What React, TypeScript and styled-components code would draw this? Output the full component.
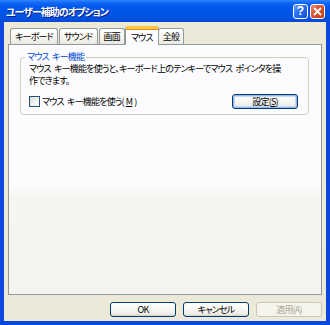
import styled, { createGlobalStyle } from 'styled-components'

const GlobalStyle = createGlobalStyle`
  html, body {
    margin: 0;
    padding: 0;
    background: #ffffff;
  }
  body {
    font-family: "Noto Sans CJK JP", "Noto Sans", sans-serif;
    font-size: 9px;
    letter-spacing: -0.8px;
    word-spacing: 2px;
    font-feature-settings: "palt";
    color: #000000;
  }
`

const Window = styled.div`
  width: 330px;
  height: 325px;
  display: flex;
  flex-direction: column;
  background: #0a48dd;
  box-sizing: border-box;
`

const TitleBar = styled.div`
  height: 22px;
  flex: none;
  display: flex;
  align-items: center;
  justify-content: space-between;
  padding: 0 5px 0 6px;
  background: linear-gradient(
    to bottom,
    #2f86ff 0%,
    #1468f5 12%,
    #0058ee 30%,
    #0055e6 65%,
    #0050dd 88%,
    #0a46d2 100%
  );
`

const TitleText = styled.span`
  color: #ffffff;
  font-weight: bold;
  font-size: 10px;
  letter-spacing: -1px;
  text-shadow: 1px 1px 0 #0a1f8c;
`

const CaptionButtons = styled.div`
  display: flex;
  gap: 2px;
`

const CaptionButton = styled.div<{ $variant: 'help' | 'close' }>`
  width: 15px;
  height: 15px;
  box-sizing: border-box;
  border: 1px solid #ffffff;
  border-radius: 3px;
  display: flex;
  align-items: center;
  justify-content: center;
  color: #ffffff;
  font-family: "Liberation Sans", sans-serif;
  font-weight: bold;
  font-size: 12px;
  letter-spacing: 0;
  background: ${({ $variant }) =>
    $variant === 'close'
      ? 'linear-gradient(135deg, #f08a6a 0%, #d9532e 45%, #c23f16 100%)'
      : 'linear-gradient(135deg, #6aa2ff 0%, #2a6cf0 45%, #1550d8 100%)'};
`

const Client = styled.div`
  flex: 1;
  margin: 0 4px 4px 4px;
  background: #ece9d8;
  display: flex;
  flex-direction: column;
  padding: 4px 4px 4px 4px;
  box-sizing: border-box;
`

const TabStrip = styled.div`
  display: flex;
  align-items: flex-end;
  height: 18px;
  padding-left: 2px;
  position: relative;
  z-index: 1;
`

const Tab = styled.div<{ $active?: boolean }>`
  box-sizing: border-box;
  height: ${({ $active }) => ($active ? '19px' : '16px')};
  margin: ${({ $active }) => ($active ? '0 -1px -1px -1px' : '0 1px 0 0')};
  padding: ${({ $active }) => ($active ? '1px 5px 0 5px' : '0 4px')};
  display: flex;
  align-items: center;
  border: 1px solid #919b9c;
  border-bottom: none;
  border-top: ${({ $active }) => ($active ? '3px solid #ffc83c' : '1px solid #919b9c')};
  border-radius: 3px 3px 0 0;
  background: ${({ $active }) =>
    $active ? '#fcfcfe' : 'linear-gradient(to bottom, #ffffff 0%, #f5f4ef 60%, #e9e8e1 100%)'};
  box-shadow: ${({ $active }) => ($active ? 'inset 0 1px 0 #e68b2c' : 'none')};
  white-space: nowrap;
  line-height: 12px;
`

const Panel = styled.div`
  height: 251px;
  box-sizing: border-box;
  border: 1px solid #919b9c;
  background: linear-gradient(
    to bottom,
    #fcfcfe 0%,
    #fcfcfe 56%,
    #f6f5f0 62%,
    #f4f3ee 100%
  );
  padding: 6px 12px 0 11px;
`

const GroupBox = styled.fieldset`
  margin: 0;
  padding: 0 10px 5px 8px;
  border: 1px solid #d0d0bf;
  border-radius: 4px;
  min-width: 0;
`

const GroupLegend = styled.legend`
  color: #0046d5;
  padding: 0 2px;
  margin-left: -4px;
  line-height: 12px;
`

const Description = styled.p`
  margin: 0;
  line-height: 12px;
  white-space: nowrap;
`

const GroupRow = styled.div`
  display: flex;
  align-items: center;
  justify-content: space-between;
  margin-top: 7px;
`

const CheckLabel = styled.label`
  display: flex;
  align-items: center;
  gap: 2px;
  white-space: nowrap;
  line-height: 12px;
`

const CheckBox = styled.span`
  width: 11px;
  height: 11px;
  box-sizing: border-box;
  border: 1px solid #1c5180;
  background: linear-gradient(135deg, #dcdcd7 0%, #f4f4f0 60%, #ffffff 100%);
`

const Key = styled.span`
  text-decoration: underline;
`

const PushButton = styled.button<{ $focused?: boolean }>`
  width: 66px;
  height: 15px;
  box-sizing: border-box;
  padding: 0;
  margin: 0;
  font: inherit;
  letter-spacing: inherit;
  line-height: 11px;
  color: #000000;
  border: 1px solid #003c74;
  border-radius: 3px;
  background: linear-gradient(to bottom, #ffffff 0%, #f6f6f3 50%, #ecebe6 85%, #d6d0c5 100%);
  box-shadow: ${({ $focused }) =>
    $focused ? 'inset 0 0 0 1px #98b8ea, inset 0 0 0 2px #c8dbf6' : 'none'};
  display: flex;
  align-items: center;
  justify-content: center;

  &:disabled {
    color: #aca899;
    border-color: #c9c7ba;
    background: #f5f4ea;
  }
`

const ButtonRow = styled.div`
  display: flex;
  justify-content: flex-end;
  gap: 7px;
  margin-top: 7px;
`

export default function App() {
  return (
    <>
      <GlobalStyle />
      <Window>
        <TitleBar>
          <TitleText>ユーザー補助のオプション</TitleText>
          <CaptionButtons>
            <CaptionButton $variant="help">?</CaptionButton>
            <CaptionButton $variant="close">
              <svg width="9" height="9" viewBox="0 0 9 9">
                <path d="M1 1 L8 8 M8 1 L1 8" stroke="#ffffff" strokeWidth="1.8" />
              </svg>
            </CaptionButton>
          </CaptionButtons>
        </TitleBar>
        <Client>
          <TabStrip>
            <Tab>キーボード</Tab>
            <Tab>サウンド</Tab>
            <Tab>画面</Tab>
            <Tab $active>マウス</Tab>
            <Tab>全般</Tab>
          </TabStrip>
          <Panel>
            <GroupBox>
              <GroupLegend>マウス キー機能</GroupLegend>
              <Description>
                マウス キー機能を使うと、キーボード上のテンキーでマウス ポインタを操
                <br />
                作できます。
              </Description>
              <GroupRow>
                <CheckLabel>
                  <CheckBox />
                  マウス キー機能を使う(<Key>M</Key>)
                </CheckLabel>
                <PushButton $focused>
                  設定(<Key>S</Key>)
                </PushButton>
              </GroupRow>
            </GroupBox>
          </Panel>
          <ButtonRow>
            <PushButton>OK</PushButton>
            <PushButton>キャンセル</PushButton>
            <PushButton disabled>適用(A)</PushButton>
          </ButtonRow>
        </Client>
      </Window>
    </>
  )
}
